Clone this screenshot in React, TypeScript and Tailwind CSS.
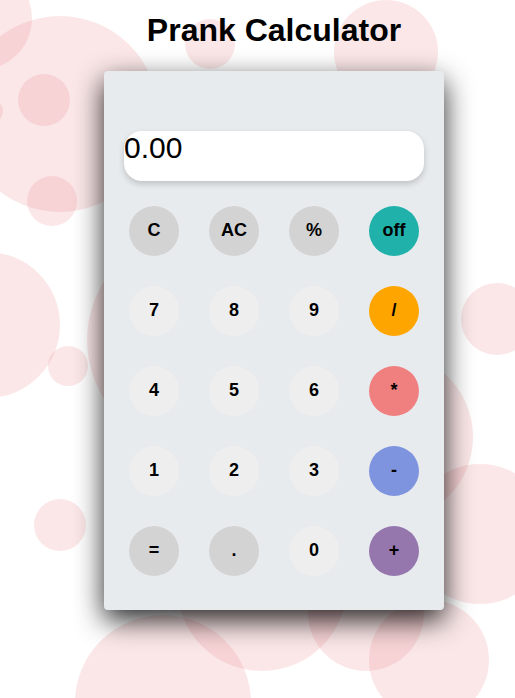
import React from "react";

type Key = { label: string; bg: string };

const KEYS: Key[] = [
  { label: "C", bg: "bg-[#d3d3d3]" },
  { label: "AC", bg: "bg-[#d3d3d3]" },
  { label: "%", bg: "bg-[#d3d3d3]" },
  { label: "off", bg: "bg-[#20b2aa]" },
  { label: "7", bg: "bg-[#eeeeee]" },
  { label: "8", bg: "bg-[#eeeeee]" },
  { label: "9", bg: "bg-[#eeeeee]" },
  { label: "/", bg: "bg-[#ffa500]" },
  { label: "4", bg: "bg-[#eeeeee]" },
  { label: "5", bg: "bg-[#eeeeee]" },
  { label: "6", bg: "bg-[#eeeeee]" },
  { label: "*", bg: "bg-[#f08080]" },
  { label: "1", bg: "bg-[#eeeeee]" },
  { label: "2", bg: "bg-[#eeeeee]" },
  { label: "3", bg: "bg-[#eeeeee]" },
  { label: "-", bg: "bg-[#7e94de]" },
  { label: "=", bg: "bg-[#d3d3d3]" },
  { label: ".", bg: "bg-[#d3d3d3]" },
  { label: "0", bg: "bg-[#eeeeee]" },
  { label: "+", bg: "bg-[#9577ae]" },
];

// decorative bubbles: [centerX, centerY, radius]
const BUBBLES: [number, number, number][] = [
  [-20, 18, 52],
  [60, 114, 98],
  [44, 100, 26],
  [-10, 111, 13],
  [52, 201, 25],
  [210, 44, 25],
  [386, 52, 52],
  [-13, 325, 73],
  [68, 366, 20],
  [197, 340, 110],
  [497, 319, 36],
  [388, 437, 85],
  [480, 534, 70],
  [60, 525, 26],
  [163, 703, 88],
  [262, 586, 85],
  [366, 613, 58],
  [429, 660, 60],
];

export default function App() {
  return (
    <div
      className="relative h-[698px] w-[515px] overflow-hidden bg-white"
      style={{ fontFamily: '"Liberation Sans", Arial, sans-serif' }}
    >
      {BUBBLES.map(([x, y, r], i) => (
        <div
          key={i}
          className="absolute rounded-full bg-[rgba(232,120,125,0.18)]"
          style={{ left: x - r, top: y - r, width: r * 2, height: r * 2 }}
        />
      ))}

      <div className="relative flex flex-col items-center pl-[33px] pt-[12px]">
        <h1 className="text-[32px] font-bold leading-[37px] text-black">Prank Calculator</h1>

        <div className="mt-[22px] w-[340px] rounded-[4px] bg-[#e8ebee] px-[10px] pb-[19px] pt-[60px] shadow-[0_10px_28px_rgba(0,0,0,0.85)]">
          <div className="mx-[10px] h-[50px] rounded-[18px] bg-white text-[30px] leading-[34px] text-black shadow-[0_3px_6px_rgba(0,0,0,0.18)]">
            0.00
          </div>

          <div className="mt-[10px] grid grid-cols-4">
            {KEYS.map((k) => (
              <div key={k.label} className="flex items-center justify-center p-[15px]">
                <button
                  className={`flex h-[50px] w-[50px] items-center justify-center rounded-full pb-[2px] text-[18px] font-bold text-black ${k.bg}`}
                >
                  {k.label}
                </button>
              </div>
            ))}
          </div>
        </div>
      </div>
    </div>
  );
}
